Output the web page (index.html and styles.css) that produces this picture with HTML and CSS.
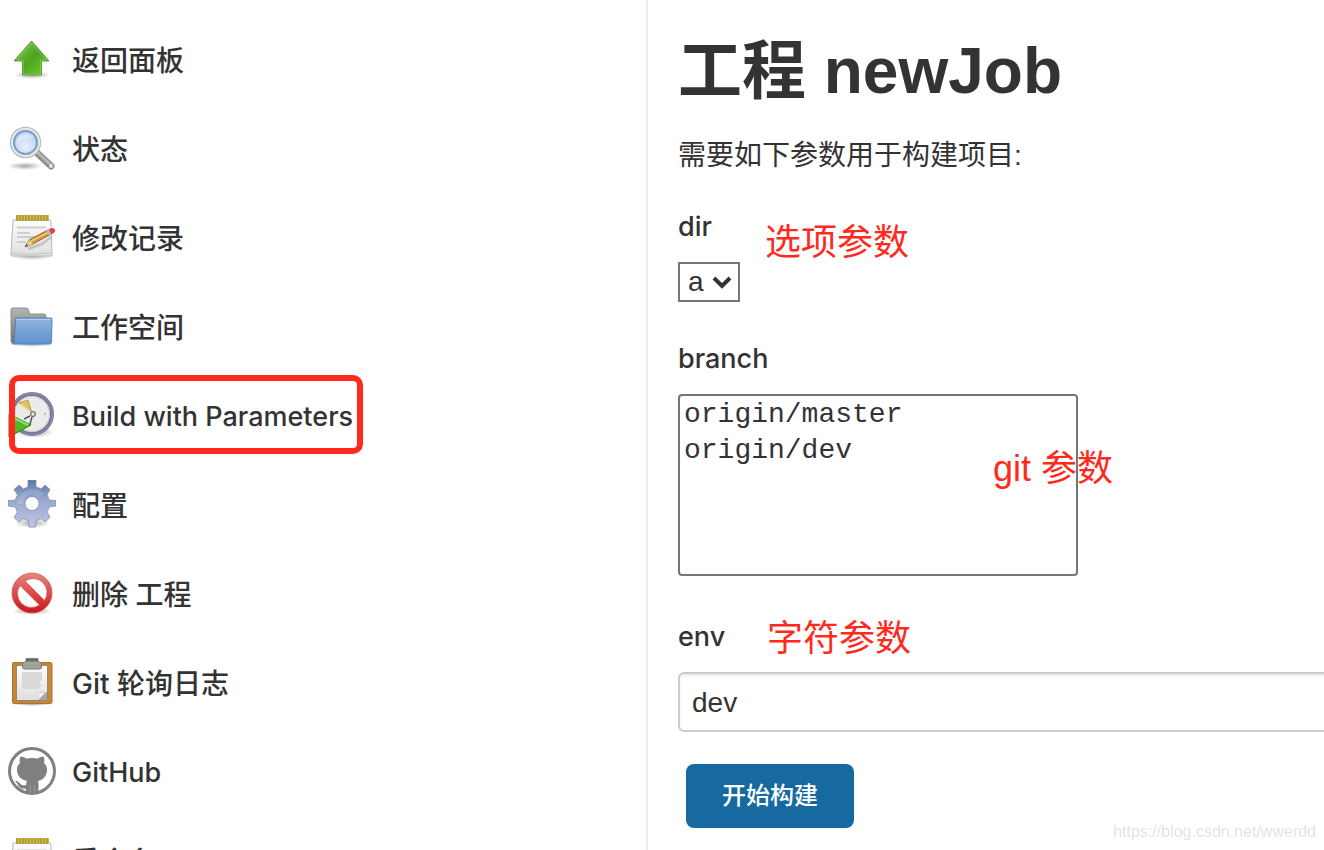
FILE: index.html
```html
<!DOCTYPE html>
<html lang="zh-CN">
<head>
  <meta charset="UTF-8">
  <title>newJob [Jenkins]</title>
  <link rel="stylesheet" href="styles.css">
</head>
<body>

<!-- Shared gradients and the notepad icon -->
<svg class="defs" width="0" height="0" aria-hidden="true">
  <defs>
    <linearGradient id="green" x1="0" y1="0" x2="1" y2="1">
      <stop offset="0" stop-color="#8ccf5c"/><stop offset=".5" stop-color="#4fa321"/><stop offset="1" stop-color="#6fd326"/>
    </linearGradient>
    <radialGradient id="lens" cx=".5" cy=".65" r=".6">
      <stop offset="0" stop-color="#e6f0fb"/><stop offset="1" stop-color="#b3cfed"/>
    </radialGradient>
    <linearGradient id="paper" x1="0" y1="0" x2="0" y2="1">
      <stop offset="0" stop-color="#fdfdfd"/><stop offset="1" stop-color="#dfdfdf"/>
    </linearGradient>
    <linearGradient id="blue" x1="0" y1="0" x2="0" y2="1">
      <stop offset="0" stop-color="#8fb5de"/><stop offset="1" stop-color="#5f92cb"/>
    </linearGradient>
    <linearGradient id="grey" x1="0" y1="0" x2="0" y2="1">
      <stop offset="0" stop-color="#b5b5b5"/><stop offset="1" stop-color="#707070"/>
    </linearGradient>
    <linearGradient id="steel" x1="0" y1="0" x2="0" y2="1">
      <stop offset="0" stop-color="#5878aa"/><stop offset=".45" stop-color="#98abd0"/><stop offset="1" stop-color="#c6c3e2"/>
    </linearGradient>
    <linearGradient id="red" x1="0" y1="0" x2="0" y2="1">
      <stop offset="0" stop-color="#e98583"/><stop offset=".5" stop-color="#dc4b4b"/><stop offset="1" stop-color="#d01218"/>
    </linearGradient>
    <radialGradient id="shadow">
      <stop offset="0" stop-color="#000" stop-opacity=".35"/><stop offset="1" stop-color="#000" stop-opacity="0"/>
    </radialGradient>
    <symbol id="notepad" viewBox="0 0 48 48">
      <ellipse cx="24" cy="43" rx="22" ry="4" fill="url(#shadow)"/>
      <path d="M5 7H42L43 10 44 42Q44 43 43 43H4Q2 43 3 40L5 10Z" fill="url(#paper)" stroke="#b9b9b5"/>
      <path d="M3 40Q14 42 43 40" fill="none" stroke="#c4c4c4"/>
      <rect x="8" y="2" width="33" height="6" fill="#d0bd55"/>
      <path d="M9 2V8M12 2V8M15 2V8M18 2V8M21 2V8M24 2V8M27 2V8M30 2V8M33 2V8M36 2V8M39 2V8" stroke="#a8952c" stroke-width="1.5"/>
      <path d="M9 14.5H38M9 20H22M9 24H30M9 29H18" stroke="#cfcfcf" stroke-width="1.8"/>
      <path d="M20 36L34 31 43 24" fill="none" stroke="#000" stroke-opacity=".15" stroke-width="3"/>
      <path d="M17 34L21 27 40 17 43 21 25 31Z" fill="#d89b42" stroke="#8e662a" stroke-width="1"/>
      <path d="M23 28L41 19" stroke="#f2c67a" stroke-width="1.4"/>
      <path d="M17 34L21 27 25 31Z" fill="#e7cfa2"/>
      <path d="M17 34L18.500 31 20 32.500Z" fill="#444"/>
      <path d="M38 18L41 16.500 44 20.500 41 22.500Z" fill="#b9bdc2"/>
      <path d="M41 16.500Q45 14.500 46.500 16.500T44 21Z" fill="#e0474c" stroke="#e0474c"/>
    </symbol>
  </defs>
</svg>

<div class="layout">
  <nav class="sidebar">
    <a href="#" class="task">
      <svg class="icon" viewBox="0 0 48 48">
        <ellipse cx="24" cy="40" rx="18" ry="4" fill="url(#shadow)"/>
        <path d="M23.500 6L41 26H33.500V40H14.500V26H6Z" fill="url(#green)" stroke="#5da238"/>
        <path d="M23.500 8L38 25H32.500V39H15.500V25H9Z" fill="none" stroke="#a4df74" stroke-opacity=".4"/>
      </svg>
      <span>返回面板</span>
    </a>
    <a href="#" class="task">
      <svg class="icon" viewBox="0 0 48 48">
        <ellipse cx="17" cy="42" rx="17" ry="4" fill="url(#shadow)"/>
        <path d="M28 28L43 42" stroke="#8e8e8e" stroke-width="7" stroke-linecap="round"/>
        <path d="M29 28L43 41" stroke="#b8b8b8" stroke-width="3" stroke-linecap="round"/>
        <circle cx="43" cy="42" r="2" fill="#e2e2e2"/>
        <circle cx="17.500" cy="18.500" r="14" fill="url(#lens)" stroke="#bcbcbc" stroke-width="3.500"/>
        <circle cx="17.500" cy="18.500" r="13.500" fill="none" stroke="#e9e9e5" stroke-width="2"/>
        <circle cx="17.500" cy="18.500" r="11.500" fill="none" stroke="#7b9fcd" stroke-width="2"/>
        <path d="M9 20Q9 10 18 10 23 10 25 13 15 13 9 20Z" fill="#fff" fill-opacity=".35"/>
      </svg>
      <span>状态</span>
    </a>
    <a href="#" class="task">
      <svg class="icon"><use href="#notepad"/></svg>
      <span>修改记录</span>
    </a>
    <a href="#" class="task">
      <svg class="icon" viewBox="0 0 48 48">
        <ellipse cx="24" cy="42" rx="22" ry="3" fill="url(#shadow)"/>
        <path d="M5 6H18Q20 6 20.500 8L21.500 12H36Q38 12 38 14V41H4Q3 41 3 39V8Q3 6 5 6Z" fill="url(#grey)" stroke="#8e8e8e"/>
        <path d="M9 16H43Q44 16 44 17L43.500 40Q43.500 42 41.500 42H4.500Q6 41 6.500 38L7.500 17Q7.500 16 9 16Z" fill="url(#blue)" stroke="#4f81bb"/>
        <path d="M9 17.500H43" stroke="#b4cfec"/>
      </svg>
      <span>工作空间</span>
    </a>
    <a href="#" class="task marked">
      <svg class="icon" viewBox="0 0 48 48">
        <ellipse cx="26" cy="41" rx="20" ry="6" fill="url(#shadow)"/>
        <circle cx="24" cy="23" r="20" fill="#ebebea" stroke="#77799a" stroke-width="4"/>
        <circle cx="24" cy="23" r="20.500" fill="none" stroke="#8f91b0" stroke-width="1"/>
        <circle cx="24" cy="23" r="17.500" fill="none" stroke="#c9c9cf"/>
        <path d="M11 12L20 9 24 22Z" fill="#e2bf62" stroke="#c59f43"/>
        <path d="M24 22L13 13" stroke="#fff3cd"/>
        <circle cx="25" cy="23" r="2.500" fill="#ddd" stroke="#555"/>
        <path d="M22 25L16 28M24 26L22 33" stroke="#555" stroke-width="1.5"/>
        <circle cx="37" cy="23" r="1" fill="#aaa"/>
        <path d="M1 23L23 34 1 46Z" fill="#4fb928" stroke="#2f8516"/>
        <path d="M6 27L20 34" stroke="#93dc73" stroke-width="2"/>
      </svg>
      <span class="latin">Build with Parameters</span>
    </a>
    <a href="#" class="task">
      <svg class="icon" viewBox="0 0 48 48">
        <ellipse cx="24" cy="43" rx="18" ry="5" fill="url(#shadow)"/>
        <path fill-rule="evenodd" fill="url(#steel)" stroke="#7f8fb5" stroke-width=".8" stroke-linejoin="round" d="M20 0H28V7Q31 7.600 33 9L37 5 42 9.500 39 15Q40.500 17 41 20L48 20.500V26L41 27Q40.500 30 39 32L42 37 37.500 42 33 38.500Q31 40 28 40.500L27.500 47H21L20.500 40.500Q17.500 40 15.500 38.500L11 42 6 37.500 9.500 32Q8 30 7.500 27L0 26V20.500L7.500 20Q8 17 9.500 15L6 9.500 11 5 15.500 9Q17.500 7.600 20 7ZM24 16.500A7 7 0 1 0 24 30.500 7 7 0 1 0 24 16.500Z"/>
        <path d="M9 24Q11 11 22 9Q30 8 35 13Q32 20 24 14Q15 15 15 24Z" fill="#fff" fill-opacity=".15"/>
      </svg>
      <span>配置</span>
    </a>
    <a href="#" class="task">
      <svg class="icon" viewBox="0 0 48 48">
        <ellipse cx="24" cy="42" rx="20" ry="4" fill="url(#shadow)"/>
        <circle cx="24" cy="24" r="15" fill="#fff"/>
        <path fill-rule="evenodd" fill="url(#red)" stroke="#d05555" stroke-width=".8" d="M24 4A20 20 0 1 0 24 44 20 20 0 1 0 24 4ZM17 12A14 14 0 0 1 36.500 31.500ZM12 16.500L31.500 36A14 14 0 0 1 12 16.500Z"/>
      </svg>
      <span>删除 工程</span>
    </a>
    <a href="#" class="task">
      <svg class="icon" viewBox="0 0 48 48">
        <ellipse cx="24" cy="46" rx="22" ry="2" fill="url(#shadow)"/>
        <rect x="4.500" y="4.500" width="39.500" height="41" rx="1.500" fill="#c48639" stroke="#ab7433"/>
        <rect x="8.500" y="7.500" width="31" height="35" fill="url(#paper)" stroke="#8f7a5c" stroke-width=".8"/>
        <path d="M14 14H34V22L31 25 34 27 30 31H14Z" fill="#d9d9d9"/>
        <path d="M30 42V34H39V42Z" fill="#a6a6a6"/>
        <path d="M30 42Q31 38 30 34 35 36 39 33Z" fill="#f4f4f4"/>
        <path d="M18 1Q18 0 19 0H29Q30 0 30 1V4H32Q33.500 4 33.500 6V9Q33.500 11 32 11H16Q14.500 11 14.500 9V6Q14.500 4 16 4H18Z" fill="#a2a49b" stroke="#7c7e76"/>
        <path d="M18 2H30" stroke="#6a6c66" stroke-width="3"/>
      </svg>
      <span>Git 轮询日志</span>
    </a>
    <a href="#" class="task">
      <svg class="icon" viewBox="0 0 48 48">
        <circle cx="24" cy="24" r="22.500" fill="#fff" stroke="#808080" stroke-width="3"/>
        <path fill="#808080" d="M12.500 9.500Q16 9.500 18 11.500 24 10.500 30 11.500 32 9.500 35.500 9.500 37 12.500 36 16 39.500 19 39 24 38 32 30 34 30.500 36 30.500 38V46H18V41.500Q12 42.500 10 38 9 35.500 7 34 9 33 11.500 36 14 39.500 18 38 18 35.500 19 34 10 32 9 24 8.500 19 12 16 11 12.500 12.500 9.500Z"/>
        <path d="M22 38V46M26.500 38V46" stroke="#999"/>
      </svg>
      <span class="latin">GitHub</span>
    </a>
    <a href="#" class="task">
      <svg class="icon"><use href="#notepad"/></svg>
      <span>重命名</span>
    </a>
  </nav>

  <main class="main">
    <h1>工程 newJob</h1>
    <p>需要如下参数用于构建项目:</p>

    <form>
      <div class="field">
        <label for="dir">dir</label>
        <div class="select-wrap">
          <select id="dir"><option>a</option></select>
          <svg class="chevron" viewBox="0 0 20 14"><path d="M2 3L10 11 18 3" fill="none" stroke="#333" stroke-width="4"/></svg>
        </div>
        <span class="note note-dir">选项参数</span>
      </div>
      <div class="field">
        <label for="branch">branch</label>
        <select id="branch" class="list" size="5">
          <option>origin/master</option>
          <option>origin/dev</option>
        </select>
        <span class="note note-branch">git 参数</span>
      </div>
      <div class="field">
        <label for="env">env</label>
        <input id="env" type="text" value="dev">
        <span class="note note-env">字符参数</span>
      </div>
      <button type="button" class="build-btn">开始构建</button>
    </form>
  </main>
</div>

<div class="watermark">https://blog.csdn.net/wwerdd</div>

</body>
</html>
```
FILE: styles.css
```css
* {
  box-sizing: border-box;
}
body {
  margin: 0;
  font-family: "Liberation Sans", "Noto Sans CJK SC", sans-serif;
  font-size: 28px;
  line-height: 36px;
  color: #333;
  background: #fff;
}
.defs {
  position: absolute;
}
.layout {
  display: grid;
  grid-template-columns: 648px minmax(0, 1fr);
  height: 100vh;
  overflow: hidden;
}

/* Sidebar */
.sidebar {
  padding: 14px 8px 0;
  border-right: 2px solid #e9eef2;
}
.task {
  position: relative;
  display: flex;
  align-items: center;
  gap: 16px;
  width: fit-content;
  height: 89px;
  color: #333;
  font-family: Inter, "Noto Sans CJK SC", sans-serif;
  font-weight: 500;
  text-decoration: none;
}
.task span {
  padding-top: 4px;
}
.task .latin {
  font-size: 27px;
}
.icon {
  width: 48px;
  height: 48px;
  flex: none;
}
.marked::after {
  content: "";
  position: absolute;
  inset: 5px -10px 5px 1px;
  border: 6px solid #ff2a1d;
  border-radius: 10px;
}

/* Build form */
.main {
  padding: 31px 0 0 30px;
}
h1 {
  margin: 0 0 27px;
  font-size: 64px;
  line-height: 80px;
}
p {
  margin: 0 0 35px;
}
.field {
  position: relative;
  margin-bottom: 39px;
}
.field label {
  display: block;
  margin-bottom: 17px;
  font-family: Inter, sans-serif;
  font-size: 27px;
  font-weight: 500;
}
select, input, button {
  display: block;
  font: inherit;
  color: #333;
}
select {
  border: 2px solid #767676;
  background: #fff;
}
.select-wrap {
  position: relative;
  width: 62px;
}
.select-wrap select {
  width: 100%;
  height: 40px;
  padding: 0 8px;
  border-radius: 0;
  appearance: none;
}
.chevron {
  position: absolute;
  top: 13px;
  right: 8px;
  width: 20px;
  height: 14px;
  pointer-events: none;
}
.list {
  width: 400px;
  max-width: 100%;
  height: 182px;
  margin-bottom: 43px;
  padding: 3px 0 0;
  border-radius: 4px;
  font-family: "Liberation Mono", monospace;
  overflow: hidden;
}
.list option {
  padding: 0 4px;
  min-height: 36px;
}
/* runs past the right edge of the window */
input {
  width: calc(100% + 16px);
  height: 60px;
  padding: 2px 12px 0;
  border: 2px solid #ccc;
  border-radius: 6px;
  box-shadow: inset 0 2px 2px rgba(0,0,0,0.08);
}
.build-btn {
  margin: -7px 0 0 8px;
  padding: 0 36px;
  height: 64px;
  border: none;
  border-radius: 8px;
  background: #166aa0;
  color: #fff;
  font-size: 24px;
  font-weight: 500;
  cursor: pointer;
}

/* Red notes over the form */
.note {
  position: absolute;
  color: #ff2a1d;
  font-size: 36px;
  line-height: 44px;
  white-space: nowrap;
}
.note-dir {
  top: 12px;
  left: 87px;
}
.note-branch {
  top: 106px;
  left: 315px;
}
.note-env {
  top: -2px;
  left: 89px;
}
.watermark {
  position: fixed;
  right: 8px;
  bottom: 8px;
  font-size: 16px;
  line-height: 20px;
  color: #e3e3e3;
}
```
